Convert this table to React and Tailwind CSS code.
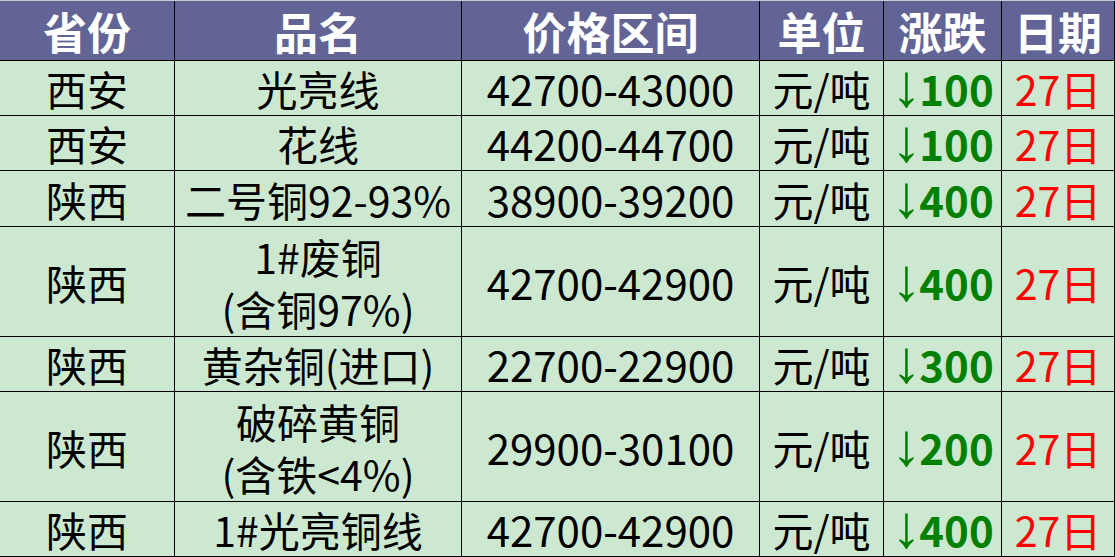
const rows = [
  { prov: "西安", name: ["光亮线"], price: "42700-43000", chg: "100", h: "h-[55px]" },
  { prov: "西安", name: ["花线"], price: "44200-44700", chg: "100", h: "h-[55px]" },
  { prov: "陕西", name: ["二号铜92-93%"], price: "38900-39200", chg: "400", h: "h-[56px]" },
  { prov: "陕西", name: ["1#废铜", "(含铜97%)"], price: "42700-42900", chg: "400", h: "h-[110px]" },
  { prov: "陕西", name: ["黄杂铜(进口)"], price: "22700-22900", chg: "300", h: "h-[55px]" },
  { prov: "陕西", name: ["破碎黄铜", "(含铁<4%)"], price: "29900-30100", chg: "200", h: "h-[110px]" },
  { prov: "陕西", name: ["1#光亮铜线"], price: "42700-42900", chg: "400", h: "h-[55px]" },
];

const headers = ["省份", "品名", "价格区间", "单位", "涨跌", "日期"];

const cell = "flex flex-col items-center justify-center border-r border-b border-black text-center leading-[52px]";

export default function App() {
  return (
    <div className="w-[1115px] h-[557px] overflow-hidden bg-[#cde8d0] font-['Noto_Sans_CJK_SC','Microsoft_YaHei',sans-serif]">
      <div className="grid grid-cols-[175px_287px_298px_124px_118px_113px] border-t border-[#c8c8d0]">
        {headers.map((h) => (
          <div
            key={h}
            className="flex h-[60px] items-center justify-center border-r border-b border-black bg-[#636496] text-[44px] font-bold leading-none text-white"
          >
            {h}
          </div>
        ))}
        {rows.map((r, i) => (
          <div key={i} className="contents">
            <div className={`${cell} ${r.h} text-[41px] text-black`}>{r.prov}</div>
            <div className={`${cell} ${r.h} text-[41px] text-black`}>
              {r.name.map((n) => (
                <div key={n}>{n}</div>
              ))}
            </div>
            <div className={`${cell} ${r.h} text-[42px] text-black`}>{r.price}</div>
            <div className={`${cell} ${r.h} text-[41px] text-black`}>元/吨</div>
            <div className={`${cell} ${r.h} text-[42px] font-bold text-[#008000]`}>
              <div className="flex items-center">
                <span className="-mt-[4px] -mr-[2px] font-['Liberation_Sans',sans-serif] text-[60px] font-normal leading-[52px]">↓</span>
                <span>{r.chg}</span>
              </div>
            </div>
            <div className={`${cell} ${r.h} text-[41px] text-[#ff0000]`}>27日</div>
          </div>
        ))}
      </div>
    </div>
  );
}
